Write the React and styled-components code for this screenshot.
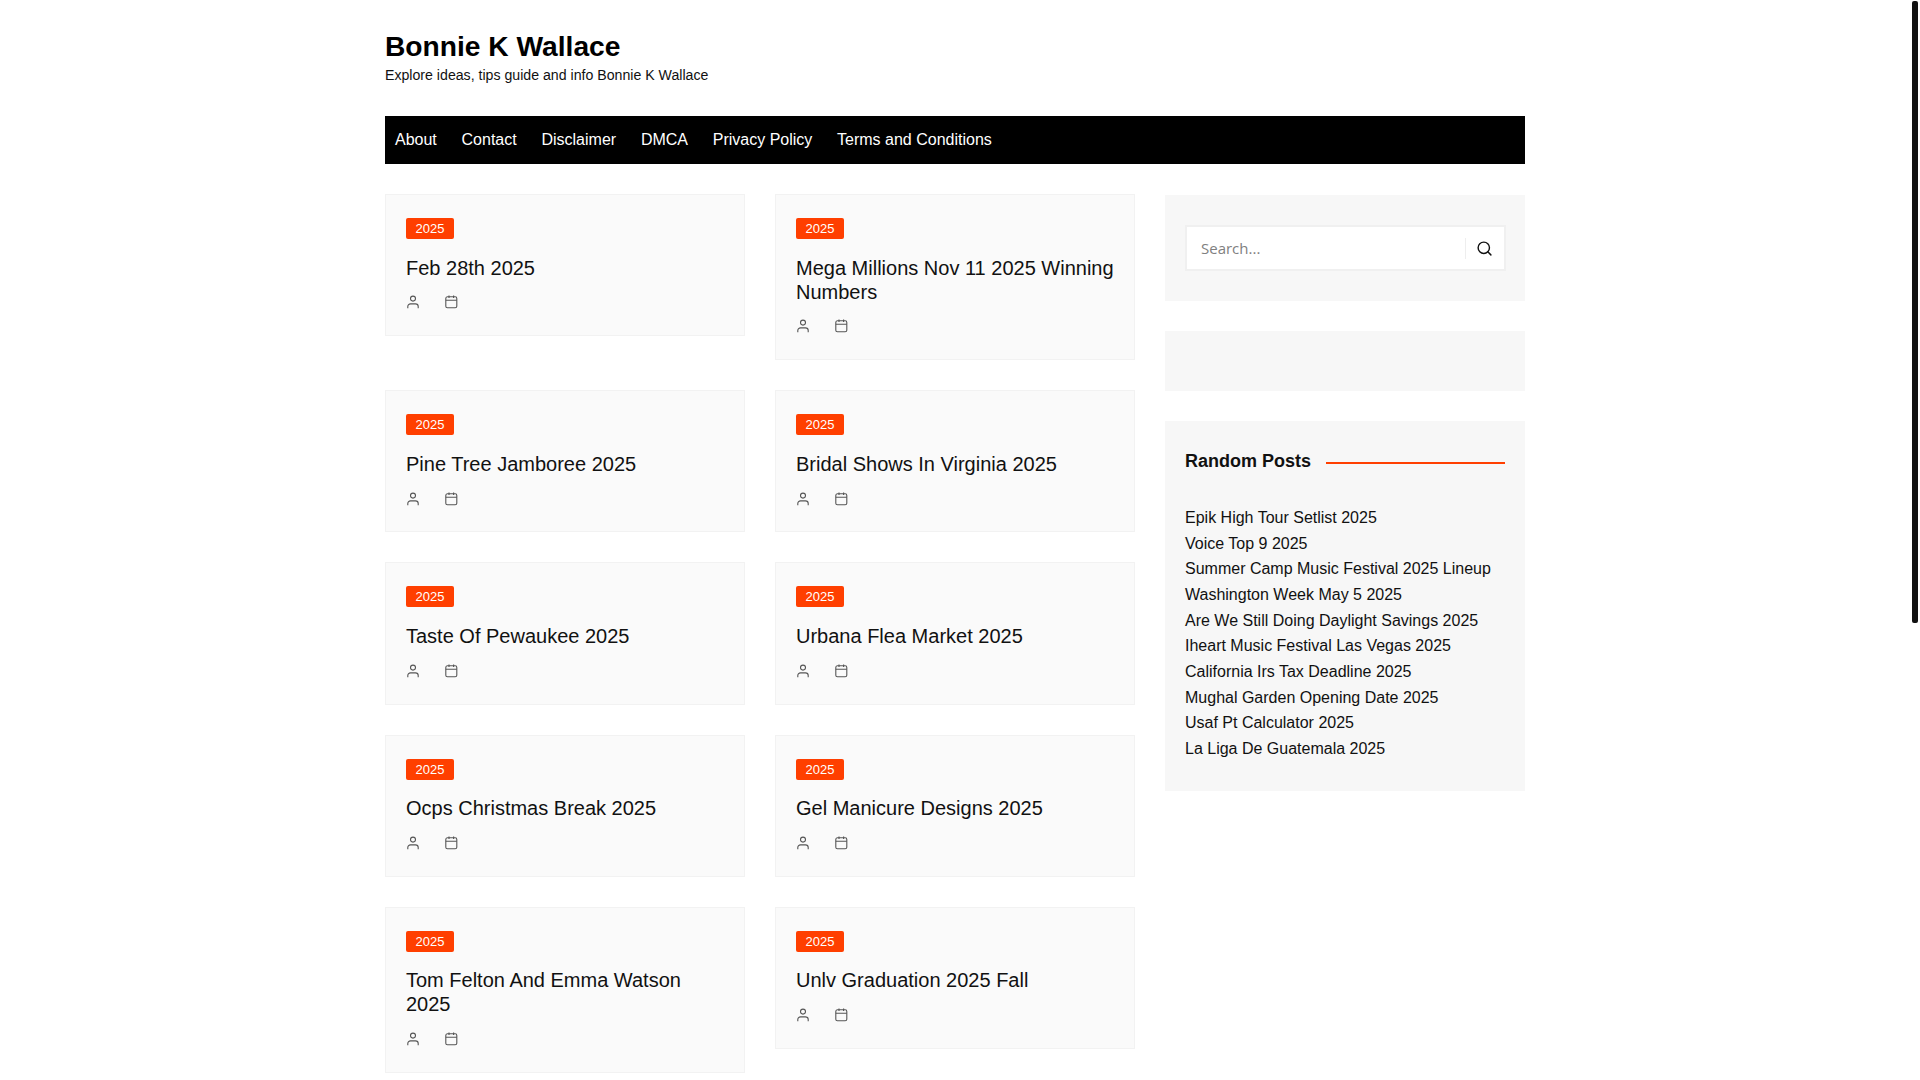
import React from 'react';
import styled, { createGlobalStyle } from 'styled-components';
import { Search } from 'lucide-react';

const posts = [
  'Feb 28th 2025',
  'Mega Millions Nov 11 2025 Winning Numbers',
  'Pine Tree Jamboree 2025',
  'Bridal Shows In Virginia 2025',
  'Taste Of Pewaukee 2025',
  'Urbana Flea Market 2025',
  'Ocps Christmas Break 2025',
  'Gel Manicure Designs 2025',
  'Tom Felton And Emma Watson 2025',
  'Unlv Graduation 2025 Fall',
];

const randomPosts = [
  'Epik High Tour Setlist 2025',
  'Voice Top 9 2025',
  'Summer Camp Music Festival 2025 Lineup',
  'Washington Week May 5 2025',
  'Are We Still Doing Daylight Savings 2025',
  'Iheart Music Festival Las Vegas 2025',
  'California Irs Tax Deadline 2025',
  'Mughal Garden Opening Date 2025',
  'Usaf Pt Calculator 2025',
  'La Liga De Guatemala 2025',
];

const menu = ['About', 'Contact', 'Disclaimer', 'DMCA', 'Privacy Policy', 'Terms and Conditions'];

const GlobalStyle = createGlobalStyle`
  html, body {
    margin: 0;
    padding: 0;
    overflow: hidden;
    background: #fff;
    font-family: "Liberation Sans", Arial, sans-serif;
    color: #111;
  }
`;

const Page = styled.div`
  height: 100vh;
  padding-right: 10px;
  overflow: hidden;
`;

/* the page scrollbar, headless chrome does not paint it */
const ScrollThumb = styled.div`
  position: fixed;
  top: 1px;
  right: 2px;
  width: 6px;
  height: 622px;
  background: #111;
  border-radius: 2px;
`;

const Container = styled.div`
  width: 1140px;
  margin: 0 auto;
`;

const Header = styled.header`
  padding: 30px 0 32px;
`;

const SiteTitle = styled.h1`
  margin: 0;
  font-size: 28.2px;
  line-height: 33px;
  font-weight: 700;
  color: #000;
`;

const Tagline = styled.p`
  margin: 3px 0 0;
  font-size: 14.15px;
  line-height: 18px;
  color: #111;
`;

const Nav = styled.nav`
  display: flex;
  align-items: center;
  gap: 24.75px;
  height: 48px;
  padding: 0 10px;
  background: #000;
`;

const NavLink = styled.a`
  font-size: 16px;
  color: #fff;
  text-decoration: none;
`;

const Content = styled.div`
  display: grid;
  grid-template-columns: 750px 360px;
  gap: 30px;
  margin-top: 30px;
`;

const PostGrid = styled.main`
  display: grid;
  grid-template-columns: repeat(2, 360px);
  gap: 30px;
  align-items: start;
`;

const Card = styled.article`
  padding: 23px 20px 25.7px;
  background: #fafafa;
  border: 1px solid #f2f2f2;
`;

const Tag = styled.span`
  display: inline-block;
  height: 21px;
  padding: 0 9.5px;
  font-size: 13px;
  line-height: 21px;
  color: #fff;
  background: #ff3f00;
  border-radius: 2px;
  vertical-align: top;
`;

const PostTitle = styled.h2`
  margin: 16.6px 0 0;
  font-size: 20px;
  line-height: 24px;
  font-weight: 400;
  color: #111;
`;

const Meta = styled.div`
  display: flex;
  gap: 25px;
  margin-top: 15.9px;
  color: #555;
`;

const MetaIcon = styled.svg`
  display: block;
  width: 14px;
  height: 14px;
  fill: none;
  stroke: currentColor;
  stroke-width: 1.1;
`;

const Sidebar = styled.aside`
  display: flex;
  flex-direction: column;
  gap: 30px;
  padding-top: 1px;
`;

const Widget = styled.section`
  padding: ${p => p.$pad || '30px 20px'};
  min-height: ${p => p.$minHeight || 'auto'};
  box-sizing: border-box;
  background: #f7f7f7;
`;

const SearchBox = styled.div`
  display: flex;
  align-items: center;
  height: 46px;
  box-sizing: border-box;
  margin-right: -1px;
  padding: 0 14px;
  background: #fff;
  border: 2px solid #f0f0f0;
`;

const SearchInput = styled.input`
  flex: 1;
  min-width: 0;
  border: 0;
  outline: 0;
  padding: 0;
  background: transparent;
  font-family: "Open Sans", sans-serif;
  font-size: 15px;
  color: #333;

  &::placeholder {
    color: #808080;
    opacity: 1;
  }
`;

const SearchButton = styled.button`
  display: flex;
  align-items: center;
  height: 21px;
  padding: 0 0 0 10px;
  margin-right: -3px;
  background: none;
  border: 0;
  border-left: 1px solid #eee;
  color: #111;
`;

const WidgetHead = styled.div`
  display: flex;
  align-items: center;
  gap: 15px;
  margin-bottom: 31px;
`;

const WidgetTitle = styled.h3`
  margin: 0;
  font-size: 18px;
  line-height: 26px;
  font-weight: 700;
  color: #111;
  white-space: nowrap;
`;

const Rule = styled.span`
  flex: 1;
  height: 2px;
  margin-top: 3px;
  background: #ff3f00;
`;

const RandomList = styled.ul`
  margin: 0;
  padding: 0;
  list-style: none;
`;

const RandomItem = styled.li`
  font-size: 16px;
  line-height: 25.67px;
  color: #111;
`;

function UserIcon() {
  return (
    <MetaIcon viewBox="0 0 14 14">
      <circle cx="7" cy="3.6" r="2.5" />
      <path d="M1.8 13.2v-1.6a2.7 2.7 0 0 1 2.7-2.7h5a2.7 2.7 0 0 1 2.7 2.7v1.6" />
    </MetaIcon>
  );
}

function CalendarIcon() {
  return (
    <MetaIcon viewBox="0 0 14 14">
      <rect x="0.8" y="1.8" width="11" height="11" rx="1.6" />
      <path d="M0.8 5.2h11M4 0.4v2.6M8.6 0.4v2.6" />
    </MetaIcon>
  );
}

function PostCard({ title }) {
  return (
    <Card>
      <Tag>2025</Tag>
      <PostTitle>{title}</PostTitle>
      <Meta>
        <UserIcon />
        <CalendarIcon />
      </Meta>
    </Card>
  );
}

export default function App() {
  return (
    <Page>
      <GlobalStyle />
      <ScrollThumb />
      <Container>
        <Header>
          <SiteTitle>Bonnie K Wallace</SiteTitle>
          <Tagline>Explore ideas, tips guide and info Bonnie K Wallace</Tagline>
        </Header>
        <Nav>
          {menu.map(item => <NavLink key={item} href="#">{item}</NavLink>)}
        </Nav>
        <Content>
          <PostGrid>
            {posts.map(title => <PostCard key={title} title={title} />)}
          </PostGrid>
          <Sidebar>
            <Widget>
              <SearchBox>
                <SearchInput placeholder="Search..." />
                <SearchButton aria-label="Search"><Search size={17} strokeWidth={2} /></SearchButton>
              </SearchBox>
            </Widget>
            <Widget $minHeight="60px" />
            <Widget $pad="27px 20px 29px">
              <WidgetHead>
                <WidgetTitle>Random Posts</WidgetTitle>
                <Rule />
              </WidgetHead>
              <RandomList>
                {randomPosts.map(item => <RandomItem key={item}>{item}</RandomItem>)}
              </RandomList>
            </Widget>
          </Sidebar>
        </Content>
      </Container>
    </Page>
  );
}
